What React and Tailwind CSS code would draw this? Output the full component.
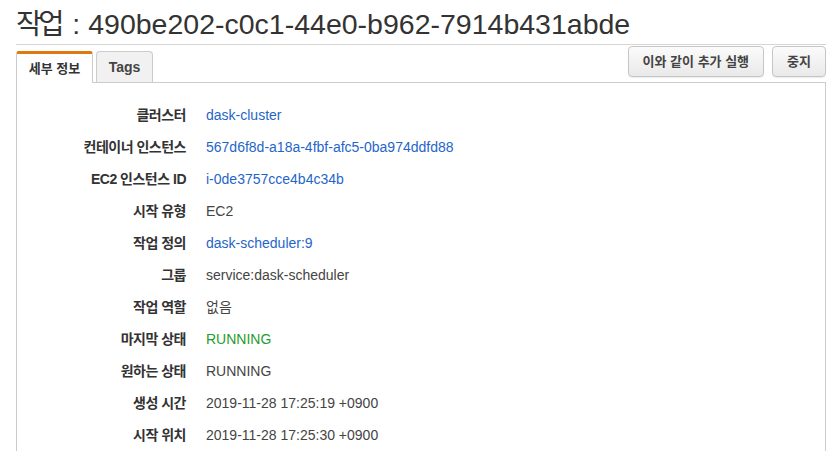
import React from 'react';

const rows = [
  { label: '클러스터', value: 'dask-cluster', kind: 'link' },
  { label: '컨테이너 인스턴스', value: '567d6f8d-a18a-4fbf-afc5-0ba974ddfd88', kind: 'link' },
  { label: 'EC2 인스턴스 ID', value: 'i-0de3757cce4b4c34b', kind: 'link' },
  { label: '시작 유형', value: 'EC2' },
  { label: '작업 정의', value: 'dask-scheduler:9', kind: 'link' },
  { label: '그룹', value: 'service:dask-scheduler' },
  { label: '작업 역할', value: '없음' },
  { label: '마지막 상태', value: 'RUNNING', kind: 'ok' },
  { label: '원하는 상태', value: 'RUNNING' },
  { label: '생성 시간', value: '2019-11-28 17:25:19 +0900' },
  { label: '시작 위치', value: '2019-11-28 17:25:30 +0900' },
];

const valueColor = {
  link: 'text-[#1f66c9]',
  ok: 'text-[#1f9d2c]',
};

function Button({ children }) {
  return (
    <button className="h-[31px] px-[14px] rounded-[4px] border border-[#c6c6c6] bg-gradient-to-b from-[#fbfbfb] to-[#e9e9e9] text-[13px] font-bold text-[#444] shadow-[0_1px_1px_rgba(0,0,0,0.08)]">
      {children}
    </button>
  );
}

export default function App() {
  return (
    <div
      className="h-[451px] bg-white pl-4 pr-[14px] overflow-hidden text-[#444]"
      style={{ fontFamily: '"Liberation Sans", "Noto Sans CJK KR", sans-serif' }}
    >
      {/* Title */}
      <h1 className="h-[45px] pt-[7px] text-[28.5px] leading-[34px] text-[#333] font-normal border-b border-[#d5d5d5]">
        <span className="tracking-[-4px] mr-[4px]">작업</span> : 490be202-c0c1-44e0-b962-7914b431abde
      </h1>

      {/* Tabs + actions */}
      <div className="flex items-end justify-between">
        <div className="flex items-end gap-[3px] pt-[6px]">
          <div className="h-[32px] w-[77px] flex items-center justify-center bg-white border-x border-[#ccc] border-t-[3px] border-t-[#e0780f] rounded-t-[3px] text-[13px] font-bold text-[#333] -mb-px relative z-10">
            세부 정보
          </div>
          <div className="h-[31px] w-[57px] flex items-center justify-center bg-[#f1f1f1] border border-b-0 border-[#ccc] rounded-t-[4px] text-[14px] font-bold text-[#444]">
            Tags
          </div>
        </div>
        <div className="flex gap-2 self-start mt-px">
          <Button>이와 같이 추가 실행</Button>
          <Button>중지</Button>
        </div>
      </div>

      {/* Details panel */}
      <div className="border-l border-r border-t border-[#ccc] pt-4 h-[400px]">
        {rows.map((r) => (
          <div key={r.label} className="flex items-center h-8 gap-5 text-[14px]">
            <div className="w-[169px] text-right font-bold text-[#333] tracking-[-0.5px]">{r.label}</div>
            <div className={valueColor[r.kind] || 'text-[#444]'}>{r.value}</div>
          </div>
        ))}
      </div>
    </div>
  );
}
